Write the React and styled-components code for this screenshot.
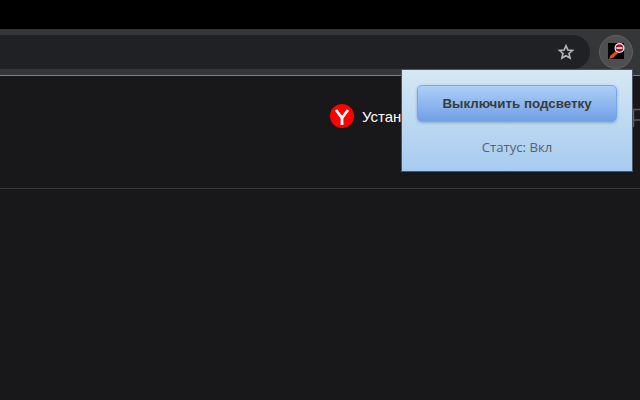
import React from "react";
import styled, { createGlobalStyle } from "styled-components";

const Global = createGlobalStyle`
  html, body { margin: 0; padding: 0; background: #000; }
  #root { width: 640px; height: 400px; overflow: hidden; }
`;
const Page = styled.div`
  position: relative;
  width: 640px;
  height: 400px;
  display: flex;
  flex-direction: column;
  background: #000;
  overflow: hidden;
  font-family: "Liberation Sans", Arial, sans-serif;
`;
const TopGap = styled.div`
  height: 29px;
  flex: none;
`;
const Toolbar = styled.div`
  height: 47px;
  flex: none;
  box-sizing: border-box;
  padding: 6px 7px 6px 0;
  display: flex;
  align-items: center;
  gap: 9px;
  background: #353638;
  border-bottom: 1px solid #7d7e80;
`;
const Omnibox = styled.div`
  flex: 1;
  height: 34px;
  margin-left: -20px;
  border-radius: 17px;
  background: #202124;
  display: flex;
  align-items: center;
  justify-content: flex-end;
  padding-right: 15px;
`;
const ExtButton = styled.div`
  width: 34px;
  height: 34px;
  flex: none;
  box-sizing: border-box;
  border: 1px solid #5f6062;
  border-radius: 50%;
  background: #4e4f51;
  display: flex;
  align-items: center;
  justify-content: center;
`;
const ExtIcon = styled.svg`
  margin-bottom: 2px;
  overflow: visible;
`;
const Content = styled.div`
  flex: 1;
  background: #18181a;
  display: flex;
  flex-direction: column;
`;
const Header = styled.div`
  height: 113px;
  flex: none;
  box-sizing: border-box;
  border-bottom: 1px solid #3a3a3b;
  display: flex;
  align-items: flex-start;
  justify-content: flex-end;
  padding-top: 28px;
`;
const Promo = styled.div`
  display: flex;
  align-items: center;
  gap: 8px;
  color: #fff;
  font-size: 15px;
  width: 310px;
  height: 24px;
  overflow: hidden;
  white-space: nowrap;
`;
const Popup = styled.div`
  position: absolute;
  left: 401px;
  top: 69px;
  width: 232px;
  height: 103px;
  box-sizing: border-box;
  border: 1px solid #4b5660;
  background: linear-gradient(#d5e8f4, #a6cbf0);
  display: flex;
  flex-direction: column;
  align-items: center;
  padding-top: 15px;
`;
const PopupButton = styled.button`
  width: 200px;
  height: 37px;
  padding: 0;
  box-sizing: border-box;
  border: 1px solid #7aa6e6;
  border-radius: 5px;
  background: linear-gradient(#add0f8, #6f9fe4);
  box-shadow: 0 1px 3px rgba(70, 100, 150, 0.45);
  color: #3b3b3b;
  font-family: "Liberation Sans", Arial, sans-serif;
  font-weight: 700;
  font-size: 13.33px;
`;
const Status = styled.div`
  margin-top: 16px;
  font-family: "Open Sans", sans-serif;
  font-size: 13.2px;
  color: #59616d;
`;
const FlagIcon = styled.svg`
  position: absolute;
  left: 632px;
  top: 108px;
`;

export default function App() {
  return (
    <Page>
      <Global />
      <TopGap />
      <Toolbar>
        <Omnibox>
          <svg width="18" height="18" viewBox="0 0 24 24" fill="none" stroke="#b4b5b7" strokeWidth="2.200" strokeLinejoin="miter">
            <path d="M12 3.600l2.500 5.700 6.200.6-4.700 4.100 1.400 6.100L12 16.900l-5.400 3.200L8 14 3.300 9.900l6.200-.6z" />
          </svg>
        </Omnibox>
        <ExtButton>
          <ExtIcon width="16" height="16" viewBox="0 0 16 16">
            <rect width="16" height="16" fill="#000" />
            <path d="M1 16l1.500-3.500 5.500-4.500 2 2-5 5z" fill="#dd4a2c" />
            <path d="M8 8l2 2 1-1-2-2z" fill="#7d7d45" />
            <circle cx="11.500" cy="5" r="5" fill="#f4f4f4" />
            <circle cx="11.500" cy="5" r="3.800" fill="#a5112a" />
            <rect x="8.500" y="4" width="6" height="2" fill="#d0d0d0" />
          </ExtIcon>
        </ExtButton>
      </Toolbar>
      <Content>
        <Header>
          <Promo>
            <svg width="24" height="24" viewBox="0 0 24 24">
              <circle cx="12" cy="12" r="12" fill="#f00" />
              <path d="M6 6L12 14L18 6M12 14V21" fill="none" stroke="#fff" strokeWidth="2.800" />
            </svg>
            Установить
          </Promo>
        </Header>
      </Content>
      <FlagIcon width="8" height="20" viewBox="0 0 8 20" fill="none" stroke="#5e5e5e" strokeWidth="1.500">
        <path d="M1 1.500H8M1 12H8M1.500 1V19" />
      </FlagIcon>
      <Popup>
        <PopupButton>Выключить подсветку</PopupButton>
        <Status>Статус: Вкл</Status>
      </Popup>
    </Page>
  );
}
